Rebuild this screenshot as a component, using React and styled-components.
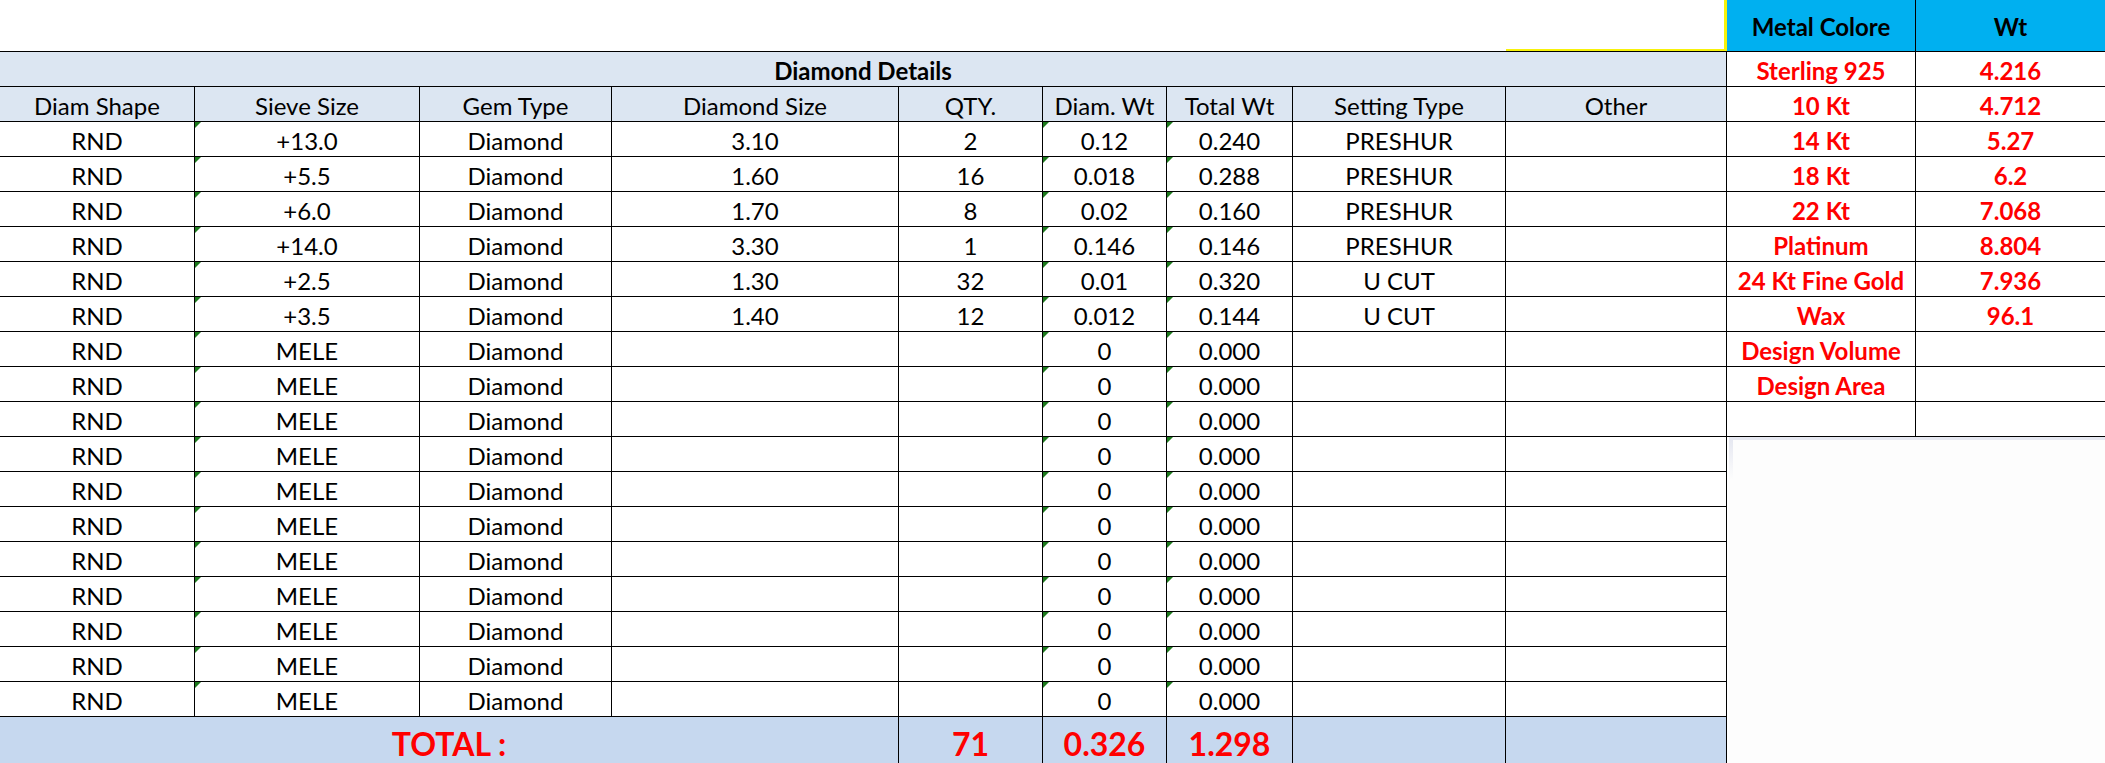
import React from 'react';
import styled, { createGlobalStyle, css } from 'styled-components';

const GlobalStyle = createGlobalStyle`
  html, body { margin: 0; padding: 0; background: #fff; overflow: hidden; }
  body { font-family: Lato, "Liberation Sans", sans-serif; }
`;

const Page = styled.div`
  display: flex;
  width: 2105px;
  height: 763px;
  overflow: hidden;
  background: #fff;
`;

const LeftPane = styled.div`
  flex: 0 0 1727px;
  display: flex;
  flex-direction: column;
`;

const TopStrip = styled.div`
  flex: 0 0 51px;
  display: flex;
  justify-content: flex-end;
`;

const SelectedCell = styled.div`
  width: 221px;
  height: 51px;
  box-sizing: border-box;
  border-bottom: 2px solid #f7f20a;
  border-right: 3px solid #f7f20a;
`;

const Sheet = styled.div`
  display: grid;
  grid-template-columns: 195px 225px 192px 287px 144px 124px 126px 213px 221px;
  grid-template-rows: 35px 35px repeat(17, 35px) 56px;
  border-top: 1px solid #000;
`;

const Cell = styled.div`
  position: relative;
  box-sizing: border-box;
  border-right: 1px solid #000;
  border-bottom: 1px solid #000;
  display: flex;
  align-items: center;
  justify-content: center;
  padding-top: 3px;
  font-size: 24px;
  color: #000;
  white-space: nowrap;
  ${(p) => p.$flag && css`
    &::before {
      content: '';
      position: absolute;
      top: 0;
      left: 0;
      border-top: 6px solid #1d7a1d;
      border-right: 6px solid transparent;
    }
  `}
`;

const TitleCell = styled(Cell)`
  grid-column: 1 / -1;
  background: #dce6f2;
  font-weight: 700;
`;

const HeadCell = styled(Cell)`
  background: #dce6f2;
`;

const TotalCell = styled(Cell)`
  grid-column: ${(p) => (p.$span ? `span ${p.$span}` : 'auto')};
  background: #c6d8ef;
  color: #ff0000;
  font-weight: 700;
  font-size: 32px;
  align-items: flex-start;
  padding-top: 7px;
  border-bottom: none;
`;

const RightPane = styled.div`
  flex: 0 0 378px;
  display: flex;
  flex-direction: column;
`;

const MetalGrid = styled.div`
  display: grid;
  grid-template-columns: 189px 189px;
  grid-template-rows: 52px repeat(11, 35px);
`;

const MetalHead = styled.div`
  box-sizing: border-box;
  background: #00b0f0;
  border-bottom: 1px solid #000;
  border-right: ${(p) => (p.$first ? '1px solid #000' : 'none')};
  display: flex;
  align-items: center;
  justify-content: center;
  padding-top: 2px;
  font-size: 24px;
  font-weight: 700;
  color: #000;
`;

const MetalCell = styled.div`
  box-sizing: border-box;
  border-bottom: 1px solid #000;
  border-right: ${(p) => (p.$first ? '1px solid #000' : 'none')};
  display: flex;
  align-items: center;
  justify-content: center;
  padding-top: 3px;
  font-size: 24px;
  font-weight: 700;
  color: #ff0000;
  white-space: nowrap;
`;

const FaintBox = styled.div`
  flex: 1;
  margin-left: 2px;
  border-top: 3px solid #e6e8f1;
  background:
    linear-gradient(to bottom, #e6e8f1, #fdfdfd 40px) left top / 4px 100% no-repeat,
    #fdfdfd;
`;

const headers = ['Diam Shape', 'Sieve Size', 'Gem Type', 'Diamond Size', 'QTY.', 'Diam. Wt', 'Total Wt', 'Setting Type', 'Other'];

const filled = [
  ['RND', '+13.0', 'Diamond', '3.10', '2', '0.12', '0.240', 'PRESHUR', ''],
  ['RND', '+5.5', 'Diamond', '1.60', '16', '0.018', '0.288', 'PRESHUR', ''],
  ['RND', '+6.0', 'Diamond', '1.70', '8', '0.02', '0.160', 'PRESHUR', ''],
  ['RND', '+14.0', 'Diamond', '3.30', '1', '0.146', '0.146', 'PRESHUR', ''],
  ['RND', '+2.5', 'Diamond', '1.30', '32', '0.01', '0.320', 'U CUT', ''],
  ['RND', '+3.5', 'Diamond', '1.40', '12', '0.012', '0.144', 'U CUT', ''],
];
const mele = Array.from({ length: 11 }, () => ['RND', 'MELE', 'Diamond', '', '', '0', '0.000', '', '']);
const rows = [...filled, ...mele];
const flagged = new Set([1, 5, 6]);

const metals = [
  ['Sterling 925', '4.216'],
  ['10 Kt', '4.712'],
  ['14 Kt', '5.27'],
  ['18 Kt', '6.2'],
  ['22 Kt', '7.068'],
  ['Platinum', '8.804'],
  ['24 Kt Fine Gold', '7.936'],
  ['Wax', '96.1'],
  ['Design Volume', ''],
  ['Design Area', ''],
  ['', ''],
];

export default function App() {
  return (
    <>
      <GlobalStyle />
      <Page>
        <LeftPane>
          <TopStrip>
            <SelectedCell />
          </TopStrip>
          <Sheet>
            <TitleCell>Diamond Details</TitleCell>
            {headers.map((h) => (
              <HeadCell key={h}>{h}</HeadCell>
            ))}
            {rows.map((r, i) =>
              r.map((v, j) => (
                <Cell key={`${i}-${j}`} $flag={flagged.has(j)}>
                  {v}
                </Cell>
              ))
            )}
            <TotalCell $span={4}>TOTAL :</TotalCell>
            <TotalCell>71</TotalCell>
            <TotalCell>0.326</TotalCell>
            <TotalCell>1.298</TotalCell>
            <TotalCell />
            <TotalCell />
          </Sheet>
        </LeftPane>
        <RightPane>
          <MetalGrid>
            <MetalHead $first>Metal Colore</MetalHead>
            <MetalHead>Wt</MetalHead>
            {metals.map(([name, wt], i) => (
              <React.Fragment key={i}>
                <MetalCell $first>{name}</MetalCell>
                <MetalCell>{wt}</MetalCell>
              </React.Fragment>
            ))}
          </MetalGrid>
          <FaintBox />
        </RightPane>
      </Page>
    </>
  );
}
